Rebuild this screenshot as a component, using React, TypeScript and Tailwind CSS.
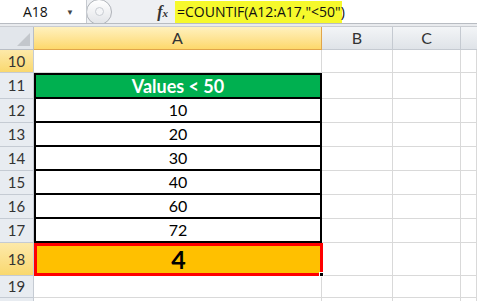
import React from 'react'

const values = ['10', '20', '30', '40', '60', '72']

const rowNum = 'w-[34px] shrink-0 flex items-center justify-center border-r border-b border-[#c5cbd3] text-[15px] text-[#333] font-["Lato",sans-serif]'
const grid = 'shrink-0 border-r border-b border-[#d9d9d9]'

function Row({ n, h, children, selected = false }: { n?: number; h: string; children?: React.ReactNode; selected?: boolean }) {
  return (
    <div className={`flex ${h}`}>
      <div className={`${rowNum} ${selected ? 'bg-gradient-to-b from-[#fde9a9] to-[#f9d86e]' : 'bg-[#e8ecf1]'}`}>{n}</div>
      {children ?? <div className={`${grid} w-[288px]`} />}
      <div className={`${grid} w-[71px]`} />
      <div className={`${grid} w-[68px]`} />
      <div className={`${grid} w-[16px]`} />
    </div>
  )
}

export default function App() {
  return (
    <div className="w-[477px] h-[301px] overflow-hidden bg-white font-['Open_Sans',sans-serif]">
      {/* formula bar */}
      <div className="flex h-[24px] border-b border-[#b8bcc2] bg-white">
        <div className="w-[87px] flex items-center border-r border-[#c6cad0] pl-[23px] text-[14px] text-[#111]">
          A18
          <span className="ml-auto mr-[12px] text-[8px] text-[#444]">▼</span>
        </div>
        <div className="w-[88px] flex items-center bg-[#eef0f3] overflow-hidden">
          <div className="w-[26px] h-[26px] shrink-0 -ml-[1px] rounded-full border border-[#aeb2b8] bg-gradient-to-b from-white to-[#e2e4e8] flex items-center justify-center">
            <div className="w-[9px] h-[9px] rounded-full border border-[#c8ccd2] bg-[#f4f5f7]" />
          </div>
          <span className="ml-auto mr-[7px] text-[16px] font-bold italic font-['Liberation_Serif',serif] text-[#333]">
            f<span className="text-[11px]">x</span>
          </span>
        </div>
        <div className="flex-1 flex items-center">
          <div className="h-[22px] w-[167px] bg-[#f6f92c] flex items-center pl-[2px] text-[14px] text-[#111] whitespace-nowrap">
            =COUNTIF(A12:A17,"&lt;50")
          </div>
        </div>
      </div>
      <div className="h-[3px] bg-[#e9ebee] border-b border-[#c9ccd1]" />
      {/* column header */}
      <div className="flex h-[23px] text-[16px] text-[#333] font-['Lato',sans-serif]">
        <div className="w-[34px] shrink-0 border-r border-b border-[#b9bec5] bg-[#e2e6eb] relative">
          <div className="absolute right-[3px] bottom-[3px] w-0 h-0 border-l-[13px] border-l-transparent border-b-[13px] border-b-[#c3c7cc]" />
        </div>
        <div className="w-[288px] shrink-0 flex items-center justify-center border-r border-b border-[#e1a54a] bg-gradient-to-b from-[#fff1be] to-[#fdd86a]">A</div>
        <div className="w-[71px] shrink-0 flex items-center justify-center border-r border-b border-[#c5cad1] bg-gradient-to-b from-[#f3f5f7] to-[#dfe3e8]">B</div>
        <div className="w-[68px] shrink-0 flex items-center justify-center border-r border-b border-[#c5cad1] bg-gradient-to-b from-[#f3f5f7] to-[#dfe3e8]">C</div>
        <div className="w-[16px] shrink-0 border-b border-[#c5cad1] bg-gradient-to-b from-[#f3f5f7] to-[#dfe3e8]" />
      </div>
      <Row n={10} h="h-[23px]" selected />
      <Row n={11} h="h-[26px]">
        <div className="w-[288px] shrink-0 flex items-center justify-center bg-[#00b050] border-2 border-black text-white text-[18px] font-bold font-['Lato',sans-serif]">
          Values &lt; 50
        </div>
      </Row>
      {values.map((v, i) => (
        <Row key={v} n={12 + i} h="h-[24px]">
          <div className="w-[288px] shrink-0 flex items-center justify-center border-x-2 border-b-2 border-black text-[16px] text-black font-['Lato',sans-serif]">
            {v}
          </div>
        </Row>
      ))}
      <Row n={18} h="h-[33px]" selected>
        <div className="w-[289px] shrink-0 relative flex items-center justify-center bg-[#ffc000] border-[3px] border-[#ff0000] -mr-[1px] text-[25px] font-bold text-black font-['Lato',sans-serif]">
          4
          <div className="absolute -right-[4px] -bottom-[4px] w-[5px] h-[5px] bg-black border border-white" />
        </div>
      </Row>
      <Row n={19} h="h-[22px]" />
      <Row h="h-[22px]" />
    </div>
  )
}
